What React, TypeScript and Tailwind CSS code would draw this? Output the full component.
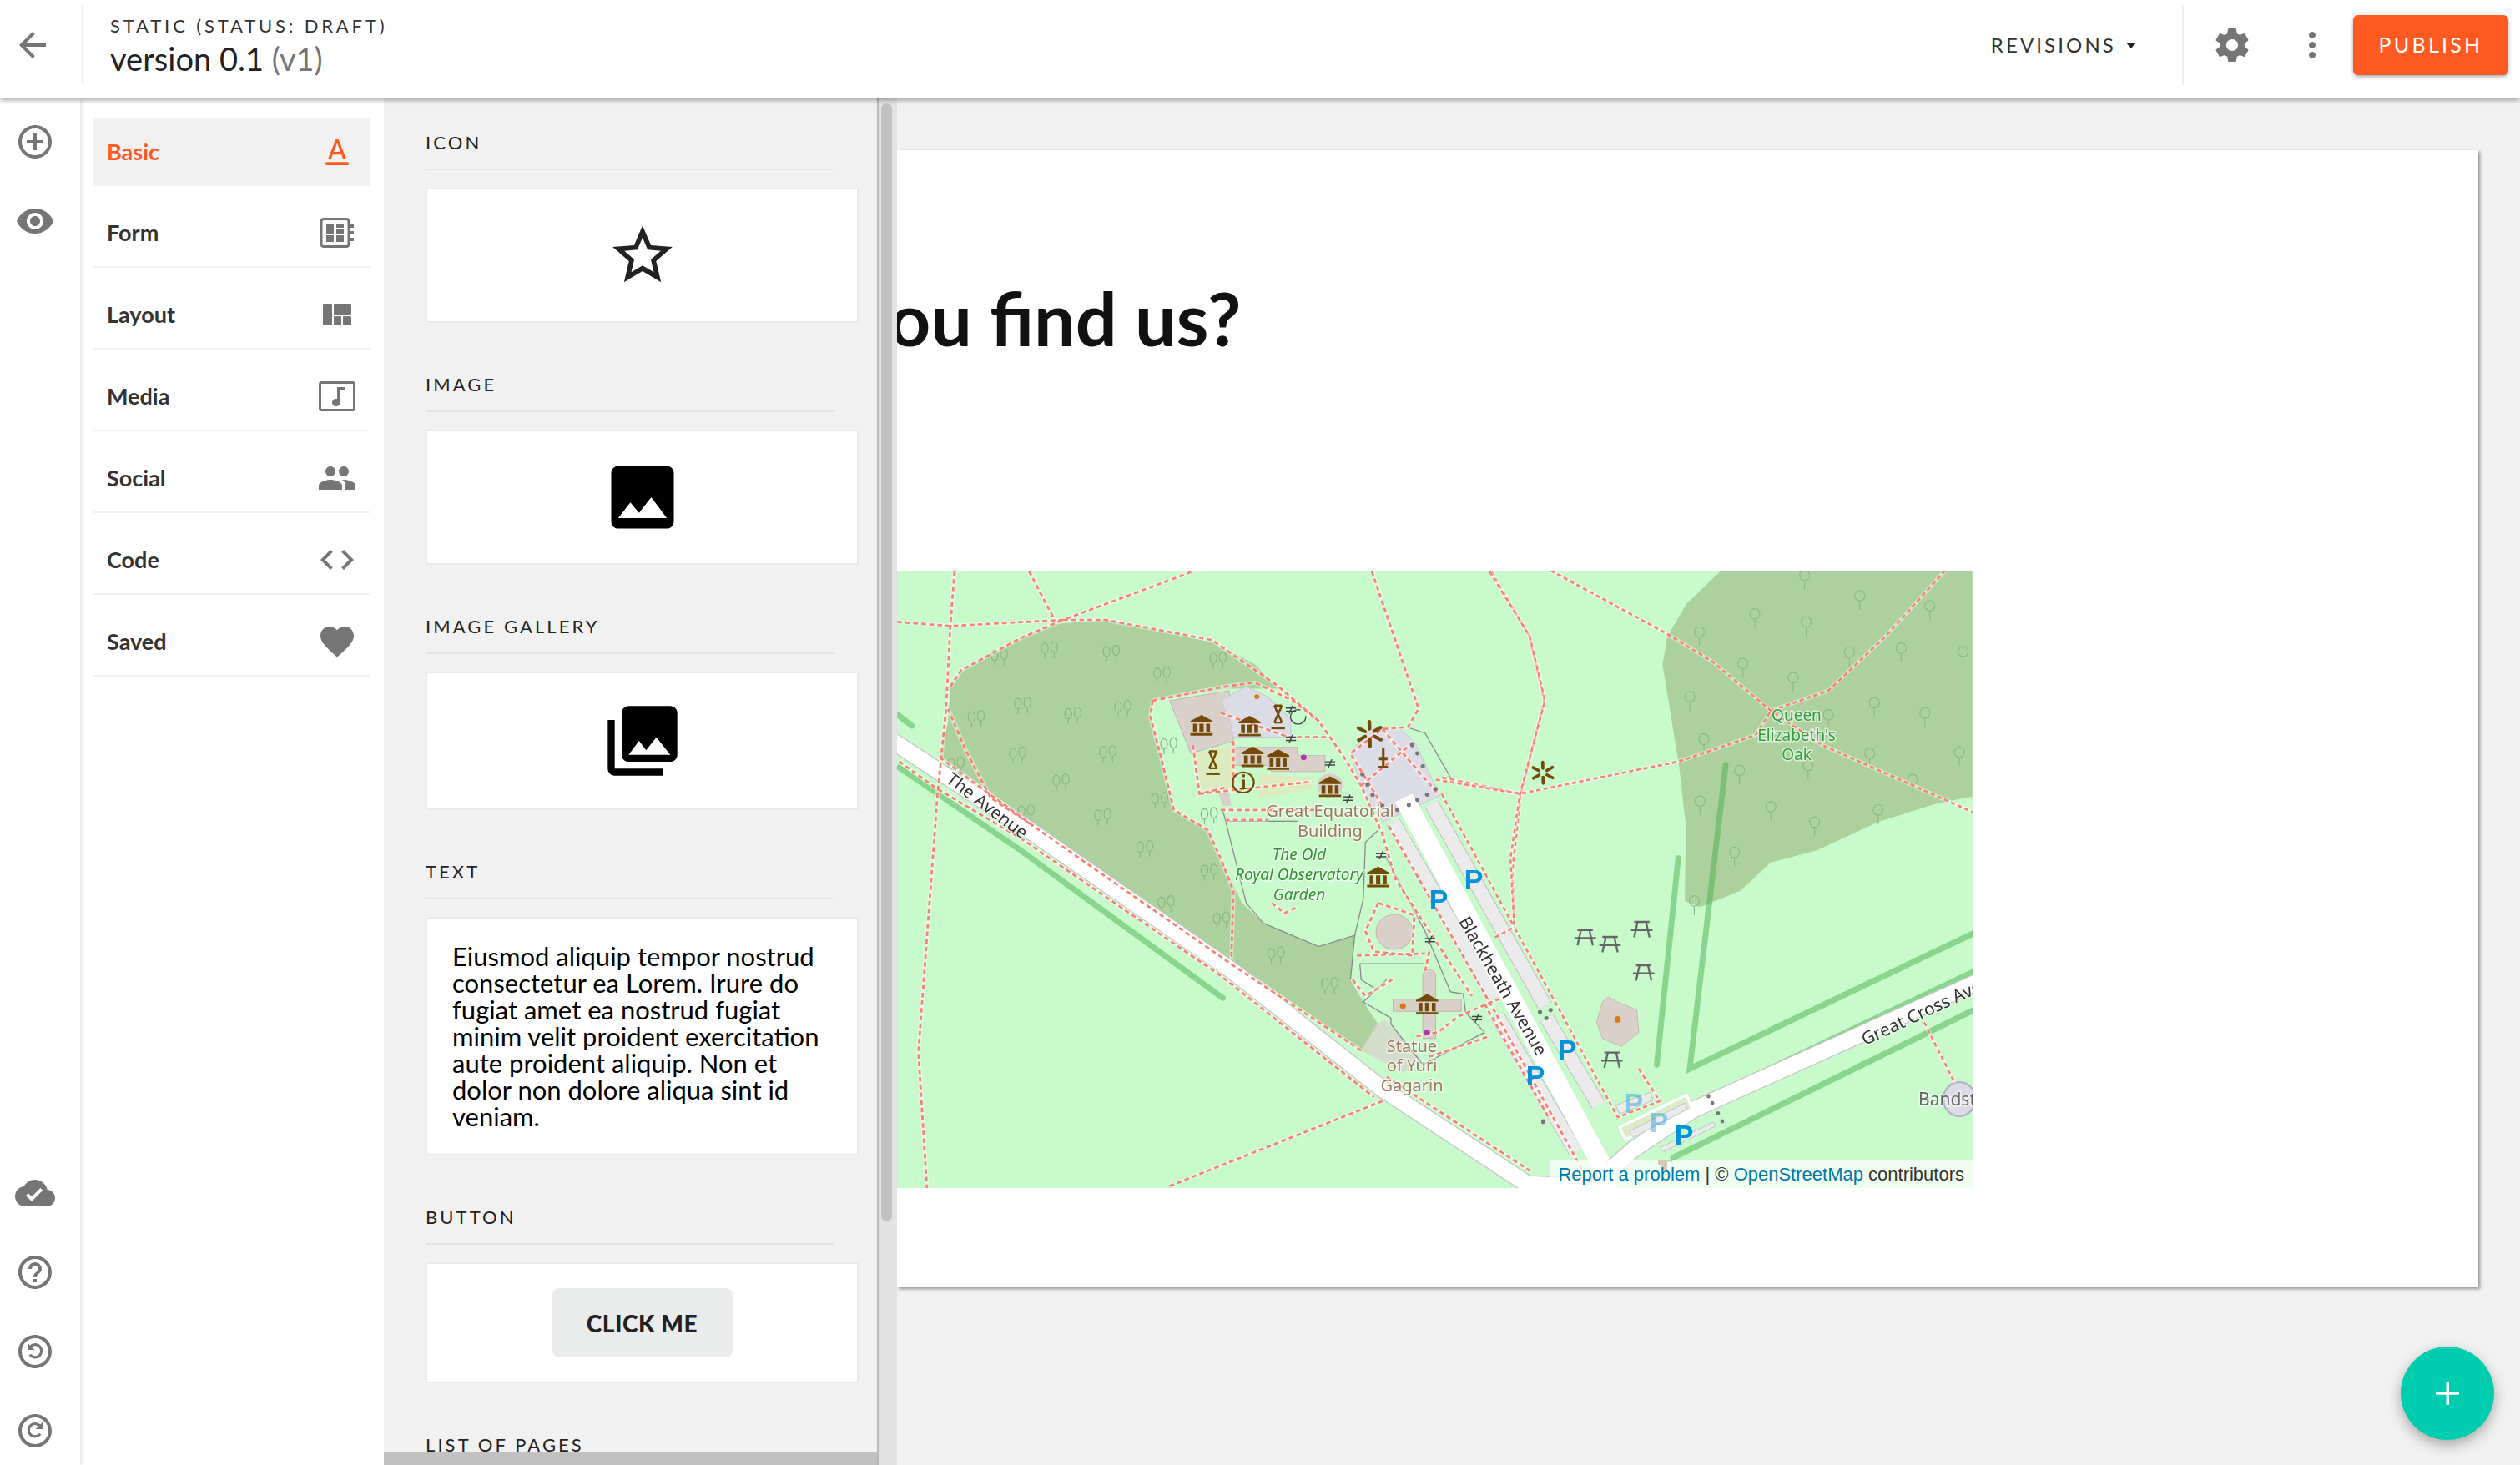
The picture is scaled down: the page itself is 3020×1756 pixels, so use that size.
import type { ReactNode } from "react"

const SANS = "font-['Lato',sans-serif]"

const ICONS: Record<string, string> = {
  back: "M20 11H7.83l5.59-5.59L12 4l-8 8 8 8 1.41-1.41L7.83 13H20v-2z",
  add: "M13 7h-2v4H7v2h4v4h2v-4h4v-2h-4V7zm-1-5C6.48 2 2 6.48 2 12s4.48 10 10 10 10-4.48 10-10S17.52 2 12 2zm0 18c-4.41 0-8-3.59-8-8s3.59-8 8-8 8 3.59 8 8-3.59 8-8 8z",
  eye: "M12 4.5C7 4.5 2.73 7.61 1 12c1.73 4.39 6 7.5 11 7.5s9.27-3.11 11-7.5c-1.73-4.39-6-7.5-11-7.5zM12 17c-2.76 0-5-2.24-5-5s2.24-5 5-5 5 2.24 5 5-2.24 5-5 5zm0-8c-1.66 0-3 1.34-3 3s1.34 3 3 3 3-1.34 3-3-1.34-3-3-3z",
  gear: "M19.43 12.98c.04-.32.07-.64.07-.98s-.03-.66-.07-.98l2.11-1.65c.19-.15.24-.42.12-.64l-2-3.46c-.12-.22-.39-.3-.61-.22l-2.49 1c-.52-.4-1.08-.73-1.69-.98l-.38-2.65C14.46 2.18 14.25 2 14 2h-4c-.25 0-.46.18-.49.42l-.38 2.65c-.61.25-1.17.59-1.69.98l-2.49-1c-.23-.09-.49 0-.61.22l-2 3.46c-.13.22-.07.49.12.64l2.11 1.65c-.04.32-.07.65-.07.98s.03.66.07.98l-2.11 1.65c-.19.15-.24.42-.12.64l2 3.46c.12.22.39.3.61.22l2.49-1c.52.4 1.08.73 1.69.98l.38 2.65c.03.24.24.42.49.42h4c.25 0 .46-.18.49-.42l.38-2.65c.61-.25 1.17-.59 1.69-.98l2.49 1c.23.09.49 0 .61-.22l2-3.46c.12-.22.07-.49-.12-.64l-2.11-1.65zM12 15.5c-1.93 0-3.5-1.57-3.5-3.5s1.57-3.5 3.5-3.5 3.5 1.57 3.5 3.5-1.57 3.5-3.5 3.5z",
  more: "M12 8c1.1 0 2-.9 2-2s-.9-2-2-2-2 .9-2 2 .9 2 2 2zm0 2c-1.1 0-2 .9-2 2s.9 2 2 2 2-.9 2-2-.9-2-2-2zm0 6c-1.1 0-2 .9-2 2s.9 2 2 2 2-.9 2-2-.9-2-2-2z",
  cloud: "M19.35 10.04C18.67 6.59 15.64 4 12 4 9.11 4 6.6 5.64 5.35 8.04 2.34 8.36 0 10.91 0 14c0 3.31 2.69 6 6 6h13c2.76 0 5-2.24 5-5 0-2.64-2.05-4.78-4.65-4.96zM10 17l-3.5-3.5 1.41-1.41L10 14.17 15.18 9l1.41 1.41L10 17z",
  help: "M11 18h2v-2h-2v2zm1-16C6.48 2 2 6.48 2 12s4.48 10 10 10 10-4.48 10-10S17.52 2 12 2zm0 18c-4.41 0-8-3.59-8-8s3.59-8 8-8 8 3.59 8 8-3.59 8-8 8zm0-14c-2.21 0-4 1.79-4 4h2c0-1.1.9-2 2-2s2 .9 2 2c0 2-3 1.75-3 5h2c0-2.25 3-2.5 3-5 0-2.21-1.79-4-4-4z",
  people: "M16 11c1.66 0 2.99-1.34 2.99-3S17.66 5 16 5c-1.66 0-3 1.34-3 3s1.34 3 3 3zm-8 0c1.66 0 2.99-1.34 2.99-3S9.66 5 8 5C6.34 5 5 6.34 5 8s1.34 3 3 3zm0 2c-2.33 0-7 1.17-7 3.5V19h14v-2.5c0-2.33-4.67-3.5-7-3.5zm8 0c-.29 0-.62.02-.97.05 1.16.84 1.97 1.97 1.97 3.45V19h6v-2.5c0-2.33-4.67-3.5-7-3.5z",
  code: "M9.4 16.6L4.8 12l4.6-4.6L8 6l-6 6 6 6 1.4-1.4zm5.2 0l4.6-4.6-4.6-4.6L16 6l6 6-6 6-1.4-1.4z",
  heart: "M12 21.35l-1.45-1.32C5.4 15.36 2 12.28 2 8.5 2 5.42 4.42 3 7.5 3c1.74 0 3.41.81 4.5 2.09C13.09 3.81 14.76 3 16.5 3 19.58 3 22 5.42 22 8.5c0 3.78-3.4 6.86-8.55 11.54L12 21.35z",
  star: "M22 9.24l-7.19-.62L12 2 9.19 8.63 2 9.24l5.46 4.73L5.82 21 12 17.27 18.18 21l-1.63-7.03L22 9.24zM12 15.4l-3.76 2.27 1-4.28-3.32-2.88 4.38-.38L12 6.1l1.71 4.04 4.38.38-3.32 2.88 1 4.28L12 15.4z",
  image: "M21 19V5c0-1.1-.9-2-2-2H5c-1.1 0-2 .9-2 2v14c0 1.1.9 2 2 2h14c1.1 0 2-.9 2-2zM8.5 13.5l2.5 3.01L14.5 12l4.5 6H5l3.5-4.5z",
  gallery: "M22 16V4c0-1.1-.9-2-2-2H8c-1.1 0-2 .9-2 2v12c0 1.1.9 2 2 2h12c1.1 0 2-.9 2-2zm-11-4l2.03 2.71L16 11l4 5H8l3-4zM2 6v14c0 1.1.9 2 2 2h14v-2H4V6H2z",
  undo: "M12 2C6.48 2 2 6.48 2 12s4.48 10 10 10 10-4.48 10-10S17.52 2 12 2zm0 18c-4.41 0-8-3.59-8-8s3.59-8 8-8 8 3.59 8 8-3.59 8-8 8zM12 7c-1.2 0-2.3.45-3.15 1.2L7.5 6.8V11h4.2L10 9.4c.55-.5 1.25-.8 2-.8 1.65 0 3 1.35 3 3s-1.35 3-3 3c-1 0-1.9-.5-2.45-1.25l-1.3.95C9.1 15.5 10.45 16.2 12 16.2c2.55 0 4.6-2.05 4.6-4.6S14.55 7 12 7z",
  redo: "M12 2C6.48 2 2 6.48 2 12s4.48 10 10 10 10-4.48 10-10S17.52 2 12 2zm0 18c-4.41 0-8-3.59-8-8s3.59-8 8-8 8 3.59 8 8-3.59 8-8 8zM12 7c1.2 0 2.3.45 3.15 1.2l1.35-1.4V11h-4.2l1.7-1.6c-.55-.5-1.25-.8-2-.8-1.65 0-3 1.35-3 3s1.35 3 3 3c1 0 1.9-.5 2.45-1.25l1.3.95c-.85 1.2-2.2 1.9-3.75 1.9-2.55 0-4.6-2.05-4.6-4.6S9.45 7 12 7z",
}

function Icon({ name, size = 48, className = "text-[#757575]" }: { name: string; size?: number; className?: string }) {
  return (
    <svg width={size} height={size} viewBox="0 0 24 24" fill="currentColor" className={className}>
      <path d={ICONS[name]} />
    </svg>
  )
}

function FormIcon() {
  return (
    <svg width="42" height="36" viewBox="0 0 42 36" fill="#757575">
      <rect x="2" y="1.5" width="33" height="33" rx="3" fill="none" stroke="#757575" strokeWidth="3" />
      <rect x="8" y="7" width="9" height="12" />
      <rect x="20" y="7" width="9" height="5" />
      <rect x="20" y="14" width="9" height="5" />
      <rect x="8" y="21" width="9" height="8" />
      <rect x="20" y="21" width="9" height="8" />
      <rect x="37" y="8" width="4" height="4" />
      <rect x="37" y="16" width="4" height="4" />
      <rect x="37" y="24" width="4" height="4" />
    </svg>
  )
}

function LayoutIcon() {
  return (
    <svg width="36" height="26" viewBox="0 0 36 26" fill="#757575">
      <rect x="1" y="0" width="11" height="26" rx="1" />
      <rect x="14" y="0" width="21" height="13" rx="1" />
      <rect x="14" y="15" width="9" height="11" rx="1" />
      <rect x="25" y="15" width="10" height="11" rx="1" />
    </svg>
  )
}

function MediaIcon() {
  return (
    <svg width="44" height="36" viewBox="0 0 44 36" fill="#757575">
      <rect x="1.5" y="1.5" width="41" height="33" rx="2" fill="none" stroke="#757575" strokeWidth="3" />
      <path d="M22 7h9v4h-5v14c0 3-2.6 5-5.4 5S16 28 16 25.400s2.400-4.900 6-4.400z" />
    </svg>
  )
}

function BasicIcon() {
  return (
    <svg width="40" height="40" viewBox="0 0 24 24" fill="#ff5a22">
      <path d="M11 3L5.500 17h2.250l1.120-3h6.250l1.120 3h2.250L13 3h-2zm-1.380 9L12 5.670 14.380 12H9.620z" />
      <rect x="3.500" y="19.400" width="17" height="2.200" rx="1" />
    </svg>
  )
}

const categories: { label: string; icon: ReactNode; active?: boolean }[] = [
  { label: "Basic", icon: <BasicIcon />, active: true },
  { label: "Form", icon: <FormIcon /> },
  { label: "Layout", icon: <LayoutIcon /> },
  { label: "Media", icon: <MediaIcon /> },
  { label: "Social", icon: <Icon name="people" /> },
  { label: "Code", icon: <Icon name="code" /> },
  { label: "Saved", icon: <Icon name="heart" /> },
]

function Section({ title, children }: { title: string; children?: ReactNode }) {
  return (
    <section className="mb-[59px] shrink-0">
      <div className="mr-[29px] border-b-2 border-[#e4e4e4] pb-[16px] text-[22px] leading-[30px] tracking-[0.14em] text-[#222]">{title}</div>
      {children}
    </section>
  )
}

function Card({ children, className }: { children: ReactNode; className: string }) {
  return <div className={`mt-[21px] flex items-center justify-center border-2 border-[#e9e9e9] bg-white ${className}`}>{children}</div>
}

const BROWN = "#734a08"
const tracksWest = [
  "M145 10 L135 145 L125 350 L105 560 L60 1200 L80 1535",
  "M10 135 L135 145 L400 130 L705 10",
  "M320 10 L380 130",
  "M400 130 L500 130 L750 180 L900 290 L1000 380 L1060 470 L1100 540 L1150 660 L1180 770 L1260 900 L1360 1060",
  "M135 295 L160 255 L300 175 L400 130",
  "M130 350 L170 450 L230 570 L330 640",
  "M1125 10 L1180 180 L1235 350 L1210 395 L1150 400 L1075 460 L1150 590",
  "M1405 10 L1495 170 L1530 330 L1475 560 L1455 750 L1460 890",
  "M610 330 L780 295 L850 285 L940 330 L1000 380",
  "M610 330 L605 370 L630 470 L660 600 L740 650 L770 720 L800 800 L795 970",
  "M770 600 L1000 600",
  "M780 625 L880 625",
  "M705 440 L720 560 L780 545",
  "M720 560 L985 530",
  "M770 360 L930 420 L1020 420",
  "M800 430 L800 550",
  "M1150 400 L1280 560",
  "M1100 540 L1225 430",
  "M1290 520 L1475 560",
  "M1140 830 L1110 900 L1130 950 L1220 960 L1225 860 L1140 830",
  "M1090 960 L1250 955",
  "M1080 1020 L1110 1060 L1180 1015",
  "M650 1530 L1150 1320",
  "M1260 1210 L1400 1160",
  "M1390 1080 L1540 1360",
  "M890 830 L920 855 L950 840",
  "M1230 1160 L1280 1150 L1330 1110 L1440 1060",
  "M1260 950 L1250 1000",
  "M110 470 L330 640 L800 985 L1100 1195",
  "M1160 1260 L1500 1495",
  "M15 480 L100 545 L300 670 L770 1010 L1130 1310",
  "M1165 640 L1420 1110 L1640 1530",
]
const tracksEast = [
  "M185 10 L290 170 L330 330 L265 560 L240 720 L250 890 L365 1090 L520 1360",
  "M345 8 L650 165 L770 235 L920 355 L1055 440 L1446 605",
  "M1375 8 L1220 170 L1070 305 L920 355",
  "M45 525 L265 560 L680 480 L880 415 L920 355",
  "M60 560 L250 890",
  "M200 915 L250 890",
  "M1320 1125 L1400 1275",
  "M575 1240 L630 1320 L520 1360",
]
const fences = [
  "M775 600 L830 830 L870 880 L1000 938 L1085 910 L1075 1020",
  "M780 628 L950 628",
  "M1097 980 L1250 980",
  "M1097 980 L1100 1020 L1130 1040",
  "M1105 1075 L1160 1020",
  "M1140 650 L1110 680 L1105 820 L1085 910",
  "M1160 720 L1250 900 L1310 1050 L1340 1055 L1345 1100 L1390 1150",
  "M1105 1075 L1170 1115 L1170 1130 L1245 1230 L1390 1150",
  "M1215 398 L1250 410 L1310 520",
]
const treesWest = [
  [368, 200], [513, 208], [250, 218], [632, 262], [764, 225], [305, 337], [423, 362], [540, 345], [196, 370], [293, 460],
  [505, 457], [395, 527], [148, 485], [648, 437], [627, 572], [313, 603], [493, 613], [743, 610], [592, 692], [743, 750],
  [642, 828], [772, 868], [900, 955], [1026, 1030],
]
const treesEast = [
  [1152, 70], [878, 115], [1012, 135], [1335, 95], [733, 160], [1125, 210], [1260, 200], [1422, 208], [847, 238], [978, 273],
  [708, 320], [1190, 335], [1322, 360], [745, 425], [1178, 460], [1412, 457], [1290, 525], [838, 502], [735, 578], [920, 592],
  [1200, 600], [1034, 630], [825, 705], [720, 825], [1008, 20], [1070, 365], [1017, 490],
]
const museums = [[725, 390], [838, 392], [845, 468], [905, 475], [1027, 542], [1140, 765], [1255, 1080]]
const gates = [[935, 352], [935, 424], [1027, 485], [1070, 572], [1147, 712], [1262, 922], [1372, 1115]]
const bollards = [
  [1103, 512], [1115, 538], [1127, 563], [1150, 590], [1185, 600], [1212, 588], [1232, 575], [1255, 562], [1275, 548],
  [1245, 492], [1232, 460], [1220, 440], [1528, 1370], [1520, 1100], [1545, 1095], [1535, 1115],
]
const picnics = [[435, 915], [500, 932], [583, 895], [588, 1002], [505, 1218]]

function Flower({ x, y, r }: { x: number; y: number; r: number }) {
  return (
    <g stroke={BROWN} strokeWidth={r / 3.5} strokeLinecap="round">
      {[0, 60, 120, 180, 240, 300].map((a) => (
        <line key={a} x1={x + (Math.cos((a * Math.PI) / 180 + 0.5) * r) / 2.4} y1={y + (Math.sin((a * Math.PI) / 180 + 0.5) * r) / 2.4} x2={x + Math.cos((a * Math.PI) / 180 + 0.5) * r} y2={y + Math.sin((a * Math.PI) / 180 + 0.5) * r} />
      ))}
    </g>
  )
}

function Hourglass({ x, y }: { x: number; y: number }) {
  return (
    <g transform={`translate(${x} ${y})`} stroke={BROWN} strokeWidth="5" fill="none">
      <path d="M-9 -28 H9 M-9 -28 L9 14 M9 -28 L-9 14 M-9 14 H9" />
      <path d="M-16 28 H16" />
    </g>
  )
}

function MapView() {
  const halo = { paintOrder: "stroke" as const, stroke: "#ffffff", strokeOpacity: 0.6, strokeWidth: 3 }
  return (
    <svg width="1289" height="740" viewBox="1075 684 1289 740" className="block font-['Noto_Sans',sans-serif] blur-[0.6px]">
      <rect x="1075" y="684" width="1289" height="740" fill="#c8facc" />

      <g transform="translate(1070 680) scale(.5102 .4847)">
        <path d="M135 295 L160 255 L300 175 L380 140 L500 130 L620 155 L750 185 L850 240 L905 300 L780 300 L610 330 L605 370 L630 470 L660 600 L740 650 L770 720 L820 830 L870 880 L1000 938 L1085 910 L1075 1020 L1105 1075 L1140 1130 L1100 1195 L110 470 L130 380 Z" fill="#add19e" />
        {treesWest.map(([x, y]) => (
          <g key={`${x}-${y}`} fill="none" stroke="#8fb685" strokeWidth="2.500">
            <ellipse cx={x - 11} cy={y} rx="8" ry="13" />
            <ellipse cx={x + 11} cy={y - 3} rx="8" ry="13" />
            <path d={`M${x - 11} ${y + 13} v12 M${x + 11} ${y + 10} v14`} />
          </g>
        ))}
        <g fill="none" stroke="#4caf50" strokeOpacity=".5" strokeWidth="14" strokeLinecap="round">
          <path d="M12 365 L45 392" />
          <path d="M15 495 L300 700 L775 1065" />
        </g>

        {/* roads */}
        <path d="M0 430 L320 650 L800 1000 L1150 1290 L1490 1525 L1700 1535" fill="none" stroke="#c4c4c4" strokeWidth="44" />
        <path d="M0 430 L320 650 L800 1000 L1150 1290 L1490 1525 L1700 1535" fill="none" stroke="#ffffff" strokeWidth="39" />
        <g fill="none" strokeLinecap="butt">
          <path d="M1175 630 L1415 1065 M1420 1110 L1604 1445 M1265 585 L1532 1085 M1536 1115 L1658 1330" stroke="#c0c0c0" strokeWidth="36" />
          <path d="M1175 630 L1415 1065 M1420 1110 L1604 1445 M1265 585 L1532 1085 M1536 1115 L1658 1330" stroke="#ebebeb" strokeWidth="32" />
        </g>

        {/* buildings */}
        <path d="M1075 460 L1125 395 L1185 395 L1225 430 L1285 565 L1150 630 L1100 540 Z" fill="#dcdce6" stroke="#c9c9d6" strokeWidth="2" />
        <path d="M1200 570 L1676 1500" fill="none" stroke="#ffffff" strokeWidth="46" />
        <path d="M650 330 L790 305 L800 430 L700 460 Z" fill="#d9d0c9" stroke="#c4b6ab" strokeWidth="2" />
        <path d="M770 330 L830 295 L880 320 L935 375 L935 420 L800 420 L790 370 Z" fill="#dcdce6" stroke="#c9c9d6" strokeWidth="2" />
        <path d="M800 445 L950 445 L950 465 L1015 465 L1015 505 L890 505 L880 490 L800 490 Z" fill="#d9d0c9" stroke="#c4b6ab" strokeWidth="2" />
        <path d="M765 560 L790 555 L795 590 L775 590 Z" fill="#d9d0c9" />
        <circle cx="1027" cy="540" r="30" fill="#d9d0c9" />
        <circle cx="1178" cy="902" r="43" fill="#d9d0c9" stroke="#c4b6ab" strokeWidth="2" />
        <path d="M1245 1005 Q1260 985 1275 1005 V1068 H1335 V1098 H1275 V1165 H1245 V1098 H1175 V1068 H1245 Z" fill="#d9d0c9" stroke="#c4b6ab" strokeWidth="2" />
        <path d="M1135 1130 L1155 1120 L1240 1215 L1200 1250 L1100 1195 Z" fill="#d9d0c9" opacity=".7" />
        <path d="M710 460 L800 440 L800 550 L725 565 Z M860 510 L985 520 L985 550 L860 570 Z" fill="#dcecc0" />

        <g fill="none" stroke="#888888" strokeWidth="2.500">
          {fences.map((d) => <path key={d} d={d} />)}
        </g>
        <g fill="none">
          {tracksWest.map((d) => <path key={d} d={d} stroke="#ffffff" strokeOpacity=".45" strokeWidth="10" />)}
          {tracksWest.map((d) => <path key={d} d={d} stroke="#fa8072" strokeWidth="5.500" strokeDasharray="11 8" />)}
        </g>

        {/* map symbols */}
        {museums.map(([x, y]) => (
          <path key={`${x}-${y}`} transform={`translate(${x} ${y})`} d="M-26 -10 L0 -25 L26 -10 V-6 H-26Z M-20 -3 H-11 V18 H-20Z M-5 -3 H5 V18 H-5Z M11 -3 H20 V18 H11Z M-26 20 H26 V26 H-26Z" fill={BROWN} />
        ))}
        <circle cx="823" cy="532" r="25" fill="none" stroke={BROWN} strokeWidth="4.500" />
        <path d="M820 512 h7 v7 h-7z M819 525 h8 v20 h4 v4 h-15 v-4 h4 v-16 h-1z" fill={BROWN} />
        <Hourglass x={905} y={370} />
        <Hourglass x={752} y={483} />
        <path d="M1149 447 h6 v22 h7 v8 h-7 v14 h8 v6 h-22 v-6 h8 v-14 h-7 v-8 h7z" fill={BROWN} />
        <Flower x={1120} y={412} r={30} />
        <Flower x={1527} y={508} r={26} />
        <circle cx="952" cy="370" r="18" fill="none" stroke="#444" strokeWidth="2.500" strokeDasharray="90 20" />
        {gates.map(([x, y]) => (
          <path key={`${x}-${y}`} transform={`translate(${x} ${y})`} d="M-12 -4 H12 M-12 4 H12 M4 -10 L-4 10" fill="none" stroke="#444" strokeWidth="3" />
        ))}
        {bollards.map(([x, y]) => <circle key={`${x}-${y}`} cx={x} cy={y} r="5" fill="#777" />)}
        <circle cx="855" cy="320" r="6" fill="#d97a0f" />
        <circle cx="965" cy="470" r="7" fill="#ac39ac" />
        <circle cx="1198" cy="1085" r="7" fill="#d97a0f" />
        <circle cx="1255" cy="1150" r="7" fill="#ac39ac" />
      </g>

      <g transform="translate(1700 680) scale(.459 .4847)">
        <path d="M790 8 L700 90 L650 170 L637 240 L680 490 L698 640 L695 825 L735 840 L840 800 L920 730 L1040 700 L1200 630 L1350 585 L1446 567 V8 Z" fill="#add19e" />
        {treesEast.map(([x, y]) => (
          <g key={`${x}-${y}`} fill="none" stroke="#8fb685" strokeWidth="2.500">
            <circle cx={x} cy={y} r="13" />
            <path d={`M${x} ${y + 13} v22`} />
          </g>
        ))}
        <g fill="none" stroke="#4caf50" strokeOpacity=".5" strokeWidth="15" strokeLinecap="round">
          <path d="M678 720 L622 1230" />
          <path d="M802 488 L708 1240 L1460 900" />
          <path d="M818 1285 L1460 995" />
          <path d="M665 1460 L1460 1090" />
        </g>
        <path d="M500 1490 L560 1440 L720 1340 L1460 1025" fill="none" stroke="#c4c4c4" strokeWidth="44" />
        <path d="M500 1490 L560 1440 L720 1340 L1460 1025" fill="none" stroke="#ffffff" strokeWidth="39" />
        <path d="M525 1385 L700 1305 L715 1340 L540 1415 Z" fill="#dcecc8" stroke="#ffffff" strokeWidth="7" />
        <path d="M515 1330 L605 1298 L612 1318 L525 1352 Z M550 1395 L695 1325 L702 1340 L560 1410 Z M630 1435 L770 1372 L775 1382 L640 1445 Z" fill="#ebebeb" stroke="#c0c0c0" strokeWidth="2" />
        <path d="M495 1062 L520 1075 L570 1095 L575 1150 L530 1185 L480 1165 L465 1125 L480 1075 Z" fill="#d9d0c9" stroke="#c4b6ab" strokeWidth="2" />
        <circle cx="520" cy="1118" r="8" fill="#d97a0f" />
        <circle cx="1412" cy="1315" r="42" fill="#dcdce6" stroke="#b4b4c4" strokeWidth="5" />
        <g fill="none">
          {tracksEast.map((d) => <path key={d} d={d} stroke="#ffffff" strokeOpacity=".45" strokeWidth="10" />)}
          {tracksEast.map((d) => <path key={d} d={d} stroke="#fa8072" strokeWidth="5.500" strokeDasharray="11 8" />)}
        </g>
        {picnics.map(([x, y]) => (
          <path key={`${x}-${y}`} transform={`translate(${x} ${y})`} d="M-20 -18 H20 M-28 2 H28 M-11 -18 L-20 20 M11 -18 L20 20" fill="none" stroke="#666" strokeWidth="5" />
        ))}
        {[[757, 1308], [767, 1325], [782, 1350], [793, 1370], [325, 1372]].map(([x, y]) => <circle key={`${x}-${y}`} cx={x} cy={y} r="5" fill="#777" />)}
        <path d="M625 1465 h38 v5 h-14 v20 h-14 v-12 h-10z" fill={BROWN} />
      </g>

      {/* labels */}
      <g textAnchor="middle" fontSize="20" fill="#9b7a57" style={halo}>
        <text x="1594" y="979">Great Equatorial</text>
        <text x="1594" y="1003">Building</text>
        <text x="1692" y="1261">Statue</text>
        <text x="1692" y="1284">of Yuri</text>
        <text x="1692" y="1308">Gagarin</text>
      </g>
      <g textAnchor="middle" fontSize="19" fontStyle="italic" fill="#319331" style={halo}>
        <text x="1557" y="1031">The Old</text>
        <text x="1557" y="1055">Royal Observatory</text>
        <text x="1557" y="1079">Garden</text>
      </g>
      <g textAnchor="middle" fontSize="19" fill="#319e3e" style={halo}>
        <text x="2153" y="864">Queen</text>
        <text x="2153" y="888">Elizabeth's</text>
        <text x="2153" y="911">Oak</text>
      </g>
      <g fontSize="21" fill="#333333" style={halo}>
        <text x="1183" y="973" textAnchor="middle" transform="rotate(37 1183 966)">The Avenue</text>
        <text x="1801" y="1189" textAnchor="middle" transform="rotate(60 1801 1182)">Blackheath Avenue</text>
        <text x="2232" y="1254" transform="rotate(-25 2232 1247)">Great Cross Avenue</text>
        <text x="2299" y="1325" fill="#666666">Bandstand</text>
      </g>
      <g fontSize="34" fontWeight="700" fontFamily="Liberation Sans, sans-serif" textAnchor="middle" fill="#0092da">
        <text x="1724" y="1090">P</text>
        <text x="1766" y="1066">P</text>
        <text x="1840" y="1301">P</text>
        <text x="1878" y="1270">P</text>
        <text x="2018" y="1372">P</text>
        <text x="1958" y="1334" opacity=".4">P</text>
        <text x="1988" y="1357" opacity=".4">P</text>
      </g>
    </svg>
  )
}

export default function App() {
  return (
    <div className={`relative flex h-[1756px] w-[3020px] flex-col overflow-hidden bg-[#f1f1f1] text-[#222] ${SANS}`}>
      {/* Top bar */}
      <header className="relative z-30 flex h-[118px] shrink-0 items-center bg-white pb-[10px] shadow-[0_2px_6px_rgba(0,0,0,0.35)]">
        <div className="flex h-[96px] w-[100px] shrink-0 items-center justify-center border-r-2 border-[#eeeeee] pr-[20px]">
          <Icon name="back" />
        </div>
        <div className="ml-[32px] flex flex-col">
          <div className="text-[22px] leading-[30px] tracking-[0.175em] text-[#333]">STATIC (STATUS: DRAFT)</div>
          <div className="mt-[2px] text-[38px] leading-[44px] text-[#222]">
            version 0.1 <span className="text-[#757575]">(v1)</span>
          </div>
        </div>
        <div className="ml-auto flex items-center">
          <div className="text-[24px] tracking-[0.13em] text-[#333]">REVISIONS</div>
          <div className="ml-[12px] h-0 w-0 border-x-[6px] border-t-[7px] border-x-transparent border-t-[#222]" />
          <div className="ml-[55px] h-[96px] w-[2px] bg-[#eeeeee]" />
          <div className="ml-[34px]"><Icon name="gear" /></div>
          <div className="ml-[48px]"><Icon name="more" /></div>
          <button className="ml-[25px] mr-[14px] h-[72px] w-[186px] rounded-[6px] bg-[#ff5a22] text-[25px] tracking-[0.13em] text-white shadow-[0_2px_4px_rgba(0,0,0,0.35)]">PUBLISH</button>
        </div>
      </header>

      <div className="flex min-h-0 flex-1">
        {/* Icon rail */}
        <aside className="relative z-20 flex w-[96px] shrink-0 flex-col items-center justify-between bg-white pb-[17px] pr-[12px] pt-[28px] shadow-[2px_0_4px_rgba(0,0,0,0.1)]">
          <div className="flex flex-col gap-[47px]">
            <Icon name="add" />
            <Icon name="eye" />
          </div>
          <div className="flex flex-col gap-[47px]">
            <Icon name="cloud" />
            <Icon name="help" />
            <Icon name="undo" />
            <Icon name="redo" />
          </div>
        </aside>

        {/* Category list */}
        <nav className="relative z-10 w-[364px] shrink-0 bg-white px-[16px] pt-[7px]">
          {categories.map((c) => (
            <div
              key={c.label}
              className={`mt-[16px] flex h-[82px] items-center justify-between pl-[16px] pr-[16px] text-[27px] font-bold ${c.active ? "bg-[#f1f1f1] text-[#ff5a22]" : "border-b-2 border-[#f1f1f1] text-[#333]"}`}
            >
              <span>{c.label}</span>
              <span className="flex w-[48px] items-center justify-center">{c.icon}</span>
            </div>
          ))}
        </nav>

        {/* Block picker */}
        <div className="relative z-10 flex w-[591px] shrink-0 flex-col bg-[#f1f1f1]">
          <div className="min-h-0 flex-1 overflow-hidden pl-[50px] pr-[22px] pt-[38px]">
            <Section title="ICON">
              <Card className="h-[162px]"><Icon name="star" size={86} className="text-[#222]" /></Card>
            </Section>
            <Section title="IMAGE">
              <Card className="h-[162px]"><Icon name="image" size={100} className="text-black" /></Card>
            </Section>
            <Section title="IMAGE GALLERY">
              <Card className="h-[166px]"><Icon name="gallery" size={100} className="text-black" /></Card>
            </Section>
            <Section title="TEXT">
              <Card className="h-[286px] !justify-start pl-[30px] pr-[20px]">
                <p className="text-[31px] leading-[32px] text-black">Eiusmod aliquip tempor nostrud consectetur ea Lorem. Irure do fugiat amet ea nostrud fugiat minim velit proident exercitation aute proident aliquip. Non et dolor non dolore aliqua sint id veniam.</p>
              </Card>
            </Section>
            <Section title="BUTTON">
              <Card className="h-[145px]">
                <button className="h-[83px] w-[216px] rounded-[8px] bg-[#eaecec] text-[28px] font-black tracking-[0.02em] text-[#222]">CLICK ME</button>
              </Card>
            </Section>
            <Section title="LIST OF PAGES" />
          </div>
          <div className="h-[16px] shrink-0 bg-[#c1c1c1]" />
        </div>

        {/* Scrollbar */}
        <div className="relative z-10 flex w-[24px] shrink-0 flex-col border-l-2 border-[#b9b9b9] bg-[#e2e2e2] pl-[3px] pt-[6px]">
          <div className="h-[1340px] w-[13px] rounded-full bg-[#c1c1c1]" />
        </div>

        {/* Canvas */}
        <main className="min-w-0 flex-1 pt-[62px]">
          <div className="h-[1363px] w-[1895px] overflow-hidden bg-white shadow-[2px_2px_4px_rgba(0,0,0,0.4)]">
            <h1 className="ml-[-227px] mt-[146px] h-[358px] whitespace-nowrap text-[88px] font-bold leading-[110px] text-[#111]">Can you find us?</h1>
            <div className="relative w-[1289px]">
              <MapView />
              <div className="absolute bottom-0 right-0 flex h-[33px] items-center bg-white/70 px-[10px] font-['Liberation_Sans',sans-serif] text-[22px] text-[#333]">
                <span className="text-[#0078a8]">Report a problem</span>
                <span>&nbsp;|&nbsp;©&nbsp;</span>
                <span className="text-[#0078a8]">OpenStreetMap</span>
                <span>&nbsp;contributors</span>
              </div>
            </div>
          </div>
        </main>
      </div>

      <button className="absolute bottom-[30px] right-[31px] z-40 flex h-[112px] w-[112px] items-center justify-center rounded-full bg-[#00cdaf] shadow-[0_6px_16px_rgba(0,0,0,0.3)]">
        <svg width="30" height="30" viewBox="0 0 30 30" fill="#ffffff">
          <rect x="13.500" y="1" width="3.500" height="28" rx="1" />
          <rect x="1" y="13.250" width="28" height="3.500" rx="1" />
        </svg>
      </button>
    </div>
  )
}
